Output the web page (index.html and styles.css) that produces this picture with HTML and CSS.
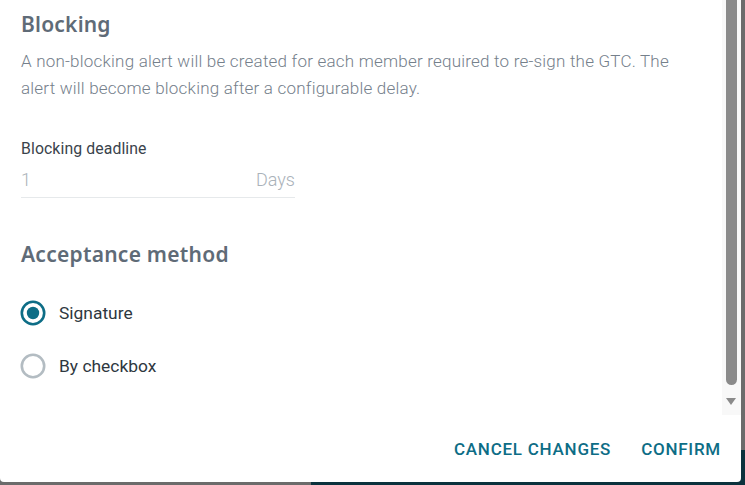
FILE: index.html
```html
<!DOCTYPE html>
<html lang="en">
<head>
<meta charset="utf-8">
<title>Blocking</title>
<link rel="stylesheet" href="styles.css">
</head>
<body>
<div class="backdrop-button"><span>REMOVE THE GTC</span></div>
<div class="dialog">
  <div class="scroll-area">
    <div class="content">
      <h2 class="title">Blocking</h2>
      <p class="desc">A non-blocking alert will be created for each member required to re-sign the GTC. The alert will become blocking after a configurable delay.</p>
      <div class="field">
        <label class="field-label">Blocking deadline</label>
        <div class="field-input">
          <span class="value">1</span>
          <span class="suffix">Days</span>
        </div>
      </div>
      <h2 class="title title-2">Acceptance method</h2>
      <div class="radios">
        <div class="radio-row">
          <svg class="radio" width="26" height="26" viewBox="0 0 26 26"><circle cx="13" cy="13" r="11.2" fill="none" stroke="#0d6d86" stroke-width="2.6"/><circle cx="13" cy="13" r="6.2" fill="#0d6d86"/></svg>
          <span class="radio-label">Signature</span>
        </div>
        <div class="radio-row">
          <svg class="radio" width="26" height="26" viewBox="0 0 26 26"><circle cx="13" cy="13" r="11.2" fill="none" stroke="#b3bcc2" stroke-width="2.6"/></svg>
          <span class="radio-label">By checkbox</span>
        </div>
      </div>
    </div>
    <div class="scrollbar">
      <div class="thumb"></div>
      <div class="arrow"></div>
    </div>
  </div>
  <div class="footer">
    <span class="btn">CANCEL CHANGES</span>
    <span class="btn">CONFIRM</span>
  </div>
</div>
</body>
</html>
```
FILE: styles.css
```css
html, body {
  margin: 0;
  padding: 0;
}
body {
  width: 745px;
  height: 485px;
  overflow: hidden;
  background: #6b6b6b;
  position: relative;
  font-family: Roboto, "Liberation Sans", sans-serif;
}
.backdrop-button {
  position: absolute;
  left: 311px;
  top: 450px;
  right: 0;
  bottom: 0;
  background: #0b323d;
  padding: 33px 0 0 27px;
  box-sizing: border-box;
}
.backdrop-button span {
  font-family: Roboto, sans-serif;
  font-weight: 700;
  font-size: 19px;
  line-height: 22px;
  color: #4f5a5f;
  letter-spacing: 0.5px;
}
.dialog {
  position: relative;
  width: 741px;
  height: 482px;
  background: #fff;
  border-radius: 0 0 4px 4px;
  display: flex;
  flex-direction: column;
}
.scroll-area {
  height: 415px;
  display: flex;
  flex-direction: row;
}
.content {
  flex: 1;
  padding: 0 22px 0 21px;
}
.title {
  margin: 0;
  padding-top: 11px;
  font-family: "Noto Sans", "Open Sans", sans-serif;
  font-weight: 600;
  font-size: 21px;
  line-height: 26px;
  color: #5f6b77;
  letter-spacing: 0.2px;
}
.desc {
  margin: 11px 0 0 0;
  font-weight: 300;
  font-size: 17px;
  line-height: 27px;
  letter-spacing: 0.21px;
  color: #75808b;
}
.field {
  margin-top: 37px;
  width: 274px;
}
.field-label {
  display: block;
  font-family: Roboto, sans-serif;
  font-weight: 400;
  font-size: 15.8px;
  line-height: 20px;
  letter-spacing: 0.1px;
  color: #3a434c;
}
.field-input {
  display: flex;
  justify-content: space-between;
  align-items: baseline;
  margin-top: 10px;
  padding-bottom: 6px;
  border-bottom: 1px solid #e6e9eb;
  font-weight: 300;
  font-size: 18px;
  line-height: 22px;
  color: #aab2b9;
}
.title-2 {
  padding-top: 43px;
  letter-spacing: 0.25px;
}
.radios {
  margin-top: 33px;
  display: flex;
  flex-direction: column;
  gap: 27px;
}
.radio-row {
  display: flex;
  align-items: center;
  gap: 13px;
  margin-left: -1px;
}
.radio {
  display: block;
  flex: none;
}
.radio-label {
  font-size: 17.4px;
  line-height: 26px;
  color: #2e3740;
}
.scrollbar {
  width: 19px;
  background: #f8f8f8;
  display: flex;
  flex-direction: column;
  align-items: flex-start;
}
.thumb {
  width: 11px;
  height: 385px;
  margin-left: 4px;
  background: #8a8a8a;
  border-radius: 0 0 6px 6px;
}
.arrow {
  margin: 13px 0 0 4px;
  width: 0;
  height: 0;
  border-left: 5.5px solid transparent;
  border-right: 5.5px solid transparent;
  border-top: 7px solid #8a8a8a;
}
.footer {
  flex: 1;
  display: flex;
  justify-content: flex-end;
  align-items: center;
  gap: 30px;
  padding: 0 20px 0 0;
}
.btn {
  font-weight: 500;
  font-size: 17px;
  letter-spacing: 0.75px;
  color: #0d6d86;
}
```
